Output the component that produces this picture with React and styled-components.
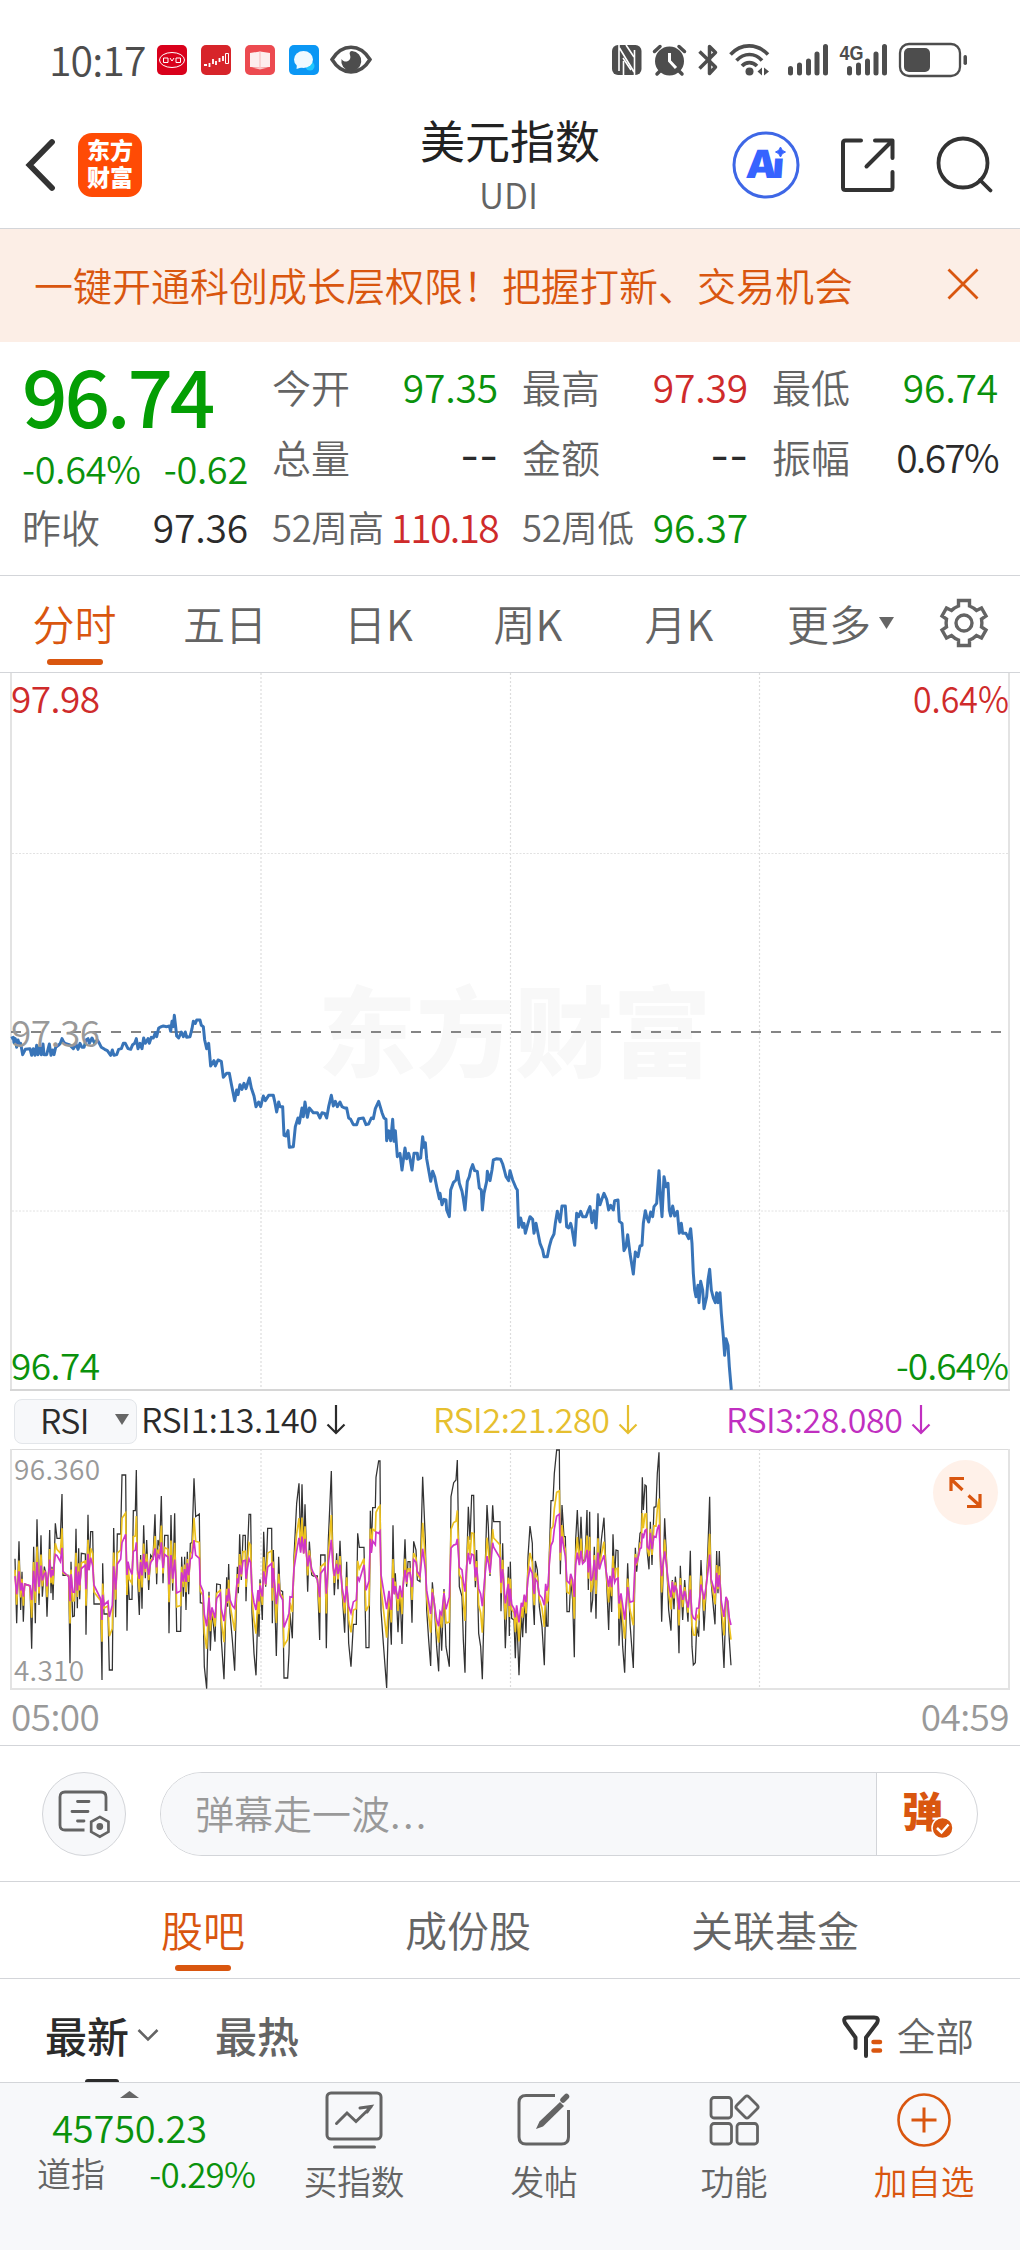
import React from "react";
import styled, { createGlobalStyle } from "styled-components";

const GREEN = "#0a920c";
const RED = "#cf2b2b";
const ORANGE = "#d9560f";
const GRAY = "#646464";
const DARK = "#2b2b2b";
const LINE = "#d3d5d9";

const GlobalStyle = createGlobalStyle`
  * {
    box-sizing: border-box;
  }
  body {
    margin: 0;
    background: #fff;
    font-family: "Noto Sans CJK SC", sans-serif;
    font-weight: 350;
    color: ${DARK};
  }
  svg {
    display: block;
    flex: none;
    overflow: visible;
  }
`;

const Page = styled.div`
  width: 1020px;
  height: 2250px;
  overflow: hidden;
  display: flex;
  flex-direction: column;
  white-space: nowrap;
`;

const StatusBar = styled.div`
  height: 100px;
  padding: 20px 52px 0 49px;
  display: flex;
  align-items: center;
  justify-content: space-between;
`;

const StatusGroup = styled.div`
  display: flex;
  align-items: center;
  gap: ${(p) => p.$gap}px;
`;

const NetworkGroup = styled.div`
  display: flex;
  align-items: center;
  gap: 11px;
  margin-left: 7px;
`;

const Clock = styled.span`
  width: 94px;
  font-size: 41px;
  line-height: 60px;
  letter-spacing: -0.9px;
  padding-bottom: 5px;
  color: #4d4d4d;
`;

const Header = styled.header`
  height: 129px;
  display: grid;
  grid-template-columns: 340px 1fr 340px;
  border-bottom: 1px solid ${LINE};
`;

const HeaderLeft = styled.div`
  display: flex;
  align-items: center;
  gap: 22px;
  padding: 2px 0 0 25px;
`;

const AppLogo = styled.div`
  width: 64px;
  height: 64px;
  border-radius: 14px;
  background: #ff4b05;
  color: #fff;
  font-size: 23px;
  line-height: 27px;
  font-weight: 900;
  text-align: center;
  padding-top: 3px;
`;

const HeaderTitle = styled.div`
  text-align: center;
  padding-top: 9px;
`;

const Title = styled.h1`
  margin: 0;
  font-size: 45px;
  line-height: 61px;
  font-weight: 400;
  color: #222;
`;

const Code = styled.div`
  font-size: 35px;
  line-height: 48px;
  padding-right: 3px;
  color: ${GRAY};
`;

const HeaderRight = styled.div`
  display: flex;
  align-items: center;
  justify-content: flex-end;
  gap: 40px;
  padding: 2px 26px 0 0;
`;

const Banner = styled.div`
  height: 113px;
  padding: 0 41px 4px 34px;
  display: flex;
  align-items: center;
  justify-content: space-between;
  background: #fceee6;
  color: ${ORANGE};
  font-size: 39px;
`;

const Quote = styled.section`
  height: 234px;
  padding: 9px 22px 0;
  display: flex;
  gap: 24px;
  border-bottom: 1px solid ${LINE};
`;

const PriceColumn = styled.div`
  width: 227px;
  color: ${GREEN};
`;

const Price = styled.div`
  height: 92px;
  font-size: 80px;
  line-height: 84px;
  font-weight: 500;
  letter-spacing: -3.2px;
  color: #049e04;
`;

const Change = styled.div`
  height: 48px;
  display: flex;
  justify-content: space-between;
  font-size: 38px;
  line-height: 50px;
  letter-spacing: -0.3px;
`;

const StatGrid = styled.div`
  flex: 1;
  display: grid;
  grid-template-columns: repeat(3, 226px);
  grid-auto-rows: 70px;
  column-gap: 24px;
`;

const Stat = styled.div`
  height: 70px;
  display: flex;
  align-items: center;
  justify-content: space-between;
`;

const StatLabel = styled.span`
  font-size: ${(p) => (p.$small ? 36.5 : 39)}px;
  letter-spacing: ${(p) => (p.$small ? -0.4 : 0)}px;
  color: ${GRAY};
`;

const StatValue = styled.span`
  font-size: 39px;
  letter-spacing: ${(p) => (p.$tight ? -1.7 : -0.2)}px;
  color: ${(p) => p.$color || DARK};
`;

const EmptyValue = styled.span`
  font-family: Inter, sans-serif;
  font-size: 41px;
  font-weight: 400;
  color: ${DARK};
`;

const Tabs = styled.nav`
  height: 97px;
  display: flex;
  border-bottom: 1px solid ${LINE};
`;

const Tab = styled.div`
  width: ${(p) => p.$w}px;
  display: flex;
  flex-direction: column;
  align-items: center;
  font-size: 42px;
  line-height: 60px;
  padding-top: 17px;
  color: ${(p) => (p.$active ? ORANGE : GRAY)};

  &::after {
    content: "";
    width: 56px;
    height: 6px;
    margin-top: 6px;
    border-radius: 3px;
    background: ${(p) => (p.$active ? ORANGE : "transparent")};
  }
`;

const TabLabel = styled.span`
  height: 60px;
  display: flex;
  align-items: center;
  gap: 8px;
`;

const IndicatorRow = styled.div`
  height: 58px;
  padding: 0 14px;
  display: grid;
  grid-template-columns: 127px 292px 293px 1fr;
  align-items: center;
`;

const IndicatorSelect = styled.div`
  width: 123px;
  height: 45px;
  display: flex;
  align-items: center;
  justify-content: space-between;
  padding: 0 7px 3px 25px;
  border: 1px solid #e3e6ea;
  border-radius: 8px;
  background: #f7f8fa;
  font-size: 34px;
  letter-spacing: -0.6px;
`;

const IndicatorValue = styled.div`
  display: flex;
  align-items: center;
  gap: 8px;
  font-size: 34px;
  line-height: 55px;
  letter-spacing: -0.4px;
  padding-bottom: 5px;
  color: ${(p) => p.$color};
`;

const TimeAxis = styled.div`
  height: 55px;
  padding: 0 11px;
  display: flex;
  justify-content: space-between;
  border-bottom: 1px solid ${LINE};
  color: #999;
  font-size: 37px;
  line-height: 49px;
  letter-spacing: -0.6px;
`;

const CommentBar = styled.div`
  height: 136px;
  padding: 0 42px;
  display: flex;
  align-items: center;
  gap: 34px;
  border-bottom: 1px solid ${LINE};
`;

const RoundButton = styled.div`
  width: 84px;
  height: 84px;
  display: flex;
  align-items: center;
  justify-content: center;
  border: 1px solid ${LINE};
  border-radius: 50%;
  background: #f7f8fa;
`;

const CommentInput = styled.div`
  flex: 1;
  height: 84px;
  display: flex;
  border: 1px solid ${LINE};
  border-radius: 42px;
  overflow: hidden;
`;

const Placeholder = styled.div`
  flex: 1;
  padding-left: 34px;
  background: #f7f8fa;
  color: #999;
  font-size: 39px;
  line-height: 78px;
`;

const Dots = styled.span`
  letter-spacing: 2.4px;
`;

const CommentToggle = styled.div`
  width: 101px;
  padding-left: 26px;
  display: flex;
  align-items: center;
  border-left: 1px solid ${LINE};
`;

const SortBar = styled.div`
  height: 104px;
  padding: 0 46px 0 45px;
  display: flex;
  justify-content: space-between;
  border-bottom: 1px solid ${LINE};
`;

const SortGroup = styled.div`
  display: flex;
  gap: 56px;
`;

const SortItem = styled.div`
  display: flex;
  flex-direction: column;
  align-items: center;
  justify-content: space-between;
  padding-top: 26px;
  font-size: 42px;
  line-height: 60px;
  font-weight: 500;
  color: ${(p) => (p.$active ? DARK : GRAY)};

  &::after {
    content: "";
    width: 34px;
    height: 3px;
    border-radius: 3px 3px 0 0;
    background: ${(p) => (p.$active ? DARK : "transparent")};
  }
`;

const Filter = styled.div`
  display: flex;
  align-items: center;
  gap: 14px;
  font-size: 38.5px;
  padding-top: 12px;
  color: ${GRAY};
`;

const FilterText = styled.span`
  line-height: 60px;
  padding-bottom: 6px;
`;

const BottomBar = styled.footer`
  flex: 1;
  display: grid;
  grid-template-columns: 259px repeat(4, 190px);
  background: #f7f8fa;
`;

const IndexTicker = styled.div`
  display: flex;
  flex-direction: column;
  align-items: center;
  padding-top: 8px;
  font-size: 38px;
  color: ${GREEN};
`;

const TickerValue = styled.div`
  line-height: 50px;
  margin-top: 4px;
  letter-spacing: -0.2px;
`;

const TickerRow = styled.div`
  width: 219px;
  display: flex;
  justify-content: space-between;
  font-size: 35px;
  line-height: 42px;
  letter-spacing: -0.9px;
  margin-left: 34px;
  padding-right: 1px;
`;

const TickerName = styled.span`
  font-size: 34px;
  letter-spacing: 0;
  color: ${GRAY};
`;

const Action = styled.div`
  display: flex;
  flex-direction: column;
  align-items: center;
  padding-top: 6px;
  font-size: 33.6px;
  line-height: 50px;
  gap: 7px;
  color: ${(p) => p.$color || GRAY};
`;

// Chart traces: x,y pairs at three units per pixel. The second half of a
// session starts 1140 units in.
const HALF = 1140;

const PRICE_A =
  "33,235 40,232 42,248 46,236 50,262 54,240 58,252 62,250 68,284 76,268 90,266 95,286 100,266 105,286 110,256 114,284 119,262 124,284 129,252 132,284 140,284 148,252 153,286 158,270 162,284 167,262 175,256 181,250 186,236 192,248 200,252 208,254 220,266 228,252 234,268 240,250 246,262 252,262 258,240 264,236 268,250 276,234 284,250 292,240 298,250 304,262 314,268 322,272 332,286 337,270 342,286 350,284 356,268 364,266 370,250 376,250 384,266 392,268 398,254 404,250 409,236 414,266 420,250 426,266 431,234 436,250 444,236 448,250 454,232 460,234 466,218 470,230 476,204 484,200 490,198 500,200 508,198 512,214 516,184 520,200 523,166 527,200 530,228 536,234 544,216 550,230 556,216 560,232 570,230 576,206 580,184 586,190 590,180 600,180 604,196 610,200 614,240 620,266 626,250 632,318 642,302 646,318 654,300 664,304 670,352 680,340 688,340 694,372 704,422 710,390 714,404 720,374 726,388 732,370 738,386 748,354 754,384 762,408 768,440 776,426 782,440 790,408 796,422 806,406 820,406 824,424 830,456 836,426 840,440 848,440 852,526 858,528 864,512 868,562 880,560 886,500 894,474 898,490 906,444 910,470 915,426 922,472 928,444 940,458 952,458 960,474 966,458 974,460 980,474 986,440 994,406 1000,438 1006,424 1012,440 1020,426 1026,440 1034,444 1040,444 1046,474 1052,478 1060,494 1070,494 1076,476 1090,474 1098,494 1106,492 1114,474 1120,476 1126,446 1136,424";
const PRICE_B =
  "6,458 12,474 18,478 20,542 26,512 32,542 38,478 42,544 46,512 52,590 60,580 66,630 70,600 75,564 80,596 86,580 90,596 96,630 102,580 112,580 114,598 122,594 128,530 132,562 136,548 140,596 146,630 152,664 158,634 164,650 170,680 178,716 180,700 186,734 192,718 198,720 200,750 208,770 212,690 220,668 228,660 233,634 238,670 246,694 250,716 255,750 262,664 268,650 272,630 278,614 284,632 292,634 298,684 304,690 307,750 312,700 320,664 322,634 330,662 336,630 340,600 350,596 362,598 368,612 374,634 378,650 386,662 390,632 398,660 408,684 412,690 416,802 422,774 428,802 432,790 436,820 444,790 450,770 458,778 462,820 468,790 474,820 480,850 488,870 492,890 502,890 508,860 514,838 522,822 526,790 532,754 540,786 546,738 556,738 560,800 566,804 572,790 576,806 584,856 590,760 596,770 602,754 608,770 618,770 624,754 630,740 636,788 642,752 648,804 654,704 660,734 666,716 672,700 680,718 686,750 692,736 700,750 704,722 714,720 718,784 726,790 732,872 738,860 743,824 750,880 760,942 766,876 774,890 780,858 786,856 790,790 796,752 800,770 806,786 812,756 818,770 822,740 830,730 837,632 842,720 846,770 852,650 858,680 864,670 868,750 872,768 878,738 884,768 892,754 898,820 904,790 908,820 918,820 926,836 932,806 936,850 940,940 944,990 948,1010 954,976 957,1028 962,964 968,990 972,1046 980,1010 984,960 989,928 994,990 1000,1014 1006,1028 1010,998 1014,1028 1020,998 1024,1060 1030,1130 1034,1186 1038,1136 1044,1156 1048,1220 1054,1290";
const RSI_A =
  "45,536 50,730 57,484 62,690 66,575 70,725 74,612 90,618 95,806 101,500 106,730 111,418 117,675 123,466 127,650 133,560 137,580 141,710 146,570 149,450 153,640 156,560 159,660 166,430 171,475 181,475 186,342 189,586 206,586 210,850 213,545 218,710 223,708 228,446 232,685 236,505 239,658 244,520 256,522 258,764 264,404 267,570 272,455 278,455 282,672 302,672 306,900 308,550 312,702 324,702 328,870 337,870 341,444 347,712 352,462 362,462 366,285 377,285 381,752 384,590 388,658 396,658 400,392 406,392 409,270 413,600 418,705 422,525 426,686 431,436 436,595 440,480 446,630 452,525 459,535 465,403 470,613 474,480 479,500 484,348 489,610 494,466 504,466 507,760 513,405 518,632 524,400 530,754 542,754 545,530 550,650 554,530 558,690 562,515 566,643 571,490 576,488 582,295 587,410 598,402 601,668 609,670 613,860 620,926 627,635 631,812 636,690 645,785 650,612 661,614 664,780 672,898 680,592 683,680 686,552 690,700 697,780 704,872 712,560 715,640 719,463 724,600 729,466 736,466 738,664 743,500 747,403 752,403 756,700 762,820 768,886 774,680 777,770 780,598 787,720 791,455 797,620 803,445 815,445 817,730 820,510 829,828 836,530 840,630 848,635 852,894 863,894 867,820 870,700 877,775 882,530 890,370 897,310 902,500 906,313 911,520 915,373 923,635 928,485 935,585 940,588 952,588 959,780 962,525 975,525 979,805 985,480 994,273 998,500 1003,646 1010,520 1014,628 1020,482 1026,630 1034,758 1040,545 1046,790 1053,860 1060,733 1069,733 1073,460 1078,502 1092,502 1098,803 1107,803 1111,392 1114,510 1118,383 1126,383 1128,292 1136,243";
const RSI_B =
  "0,243 3,690 10,790 20,924 27,650 34,794 39,436 43,640 46,580 54,757 60,630 66,792 70,610 75,478 80,620 84,545 90,545 96,728 101,484 108,510 112,600 120,605 128,290 136,480 140,690 146,780 152,858 157,607 163,675 170,800 176,874 180,700 185,812 192,627 198,800 208,860 213,350 221,308 228,300 232,240 238,620 246,650 250,780 255,878 260,560 265,380 270,480 275,346 281,346 286,622 290,510 296,760 302,800 307,898 314,620 321,375 325,440 330,588 338,376 341,425 360,425 363,694 368,490 376,805 385,560 388,768 391,545 395,715 402,720 406,835 410,700 417,886 424,700 428,772 433,650 438,760 444,530 450,438 457,490 460,680 463,735 466,543 472,570 478,680 486,740 493,856 497,664 500,738 504,738 508,520 513,362 519,362 523,280 530,210 538,210 541,583 546,375 552,470 556,470 561,695 568,695 572,600 578,660 583,832 587,480 592,390 598,535 603,410 608,542 615,540 621,390 625,630 629,395 633,697 638,660 643,500 648,716 654,400 658,565 664,480 672,413 677,540 686,750 690,600 695,696 699,463 704,590 708,510 714,512 717,797 723,670 728,800 734,878 743,550 750,730 760,864 766,503 770,575 776,510 780,460 784,455 787,292 790,390 795,315 799,318 802,520 807,568 811,425 816,555 822,382 828,380 832,280 837,217 841,530 845,725 850,560 854,415 858,500 866,690 873,752 877,600 882,688 886,590 892,650 897,820 901,557 908,720 914,600 924,725 931,512 936,800 940,855 946,848 950,740 956,770 963,540 968,650 972,752 978,640 984,500 989,350 993,600 1000,680 1005,733 1010,513 1014,640 1018,513 1024,700 1032,864 1038,655 1043,665 1048,780 1053,856";

const parse = (text, dx) =>
  text.split(" ").map((pair) => {
    const [x, y] = pair.split(",").map(Number);
    return [x + dx, y];
  });

const price = [...parse(PRICE_A, 0), ...parse(PRICE_B, HALF)];
const rsi1 = [...parse(RSI_A, 0), ...parse(RSI_B, HALF)];

// slower RSI lines: pull each point towards its local mean
const damp = (points, keep) =>
  points.map(([x, y]) => {
    const near = points.filter((p) => Math.abs(p[0] - x) < 30);
    const mean = near.reduce((sum, p) => sum + p[1], 0) / near.length;
    const base = mean * 0.6 + 590 * 0.4;
    return [x, base + (y - base) * keep];
  });

const rsi2 = damp(rsi1, 0.54);
const rsi3 = damp(rsi1, 0.28);

const toPoints = (points) => points.map((p) => p.join(",")).join(" ");

const GridLines = ({ height }) => (
  <g stroke="#dcdcdc" strokeWidth="1.2" strokeDasharray="2 2">
    {[261, 510.5, 759.5].map((x) => (
      <line key={x} x1={x} x2={x} y1="0" y2={height} />
    ))}
  </g>
);

const PriceChart = () => (
  <svg width="1020" height="718" viewBox="0 673 1020 718">
    <g transform="translate(0 673)">
      <GridLines height={717} />
    </g>
    <g stroke="#e2e2e2" strokeDasharray="2 1.5">
      <line x1="12" x2="1009" y1="853.5" y2="853.5" />
      <line x1="12" x2="1009" y1="1211" y2="1211" />
    </g>
    <text x="318" y="1069" fontSize="98" fontWeight="900" fill="#f8f8f8" textLength="393">
      东方财富
    </text>
    <path d="M11 673V1391M1009 673V1391" stroke="#e3e3e3" strokeWidth="2" />
    <path d="M10 1390H1010" stroke="#d6d6d6" strokeWidth="2" />
    <path d="M11 1032H1004" stroke="#858585" strokeWidth="2" strokeDasharray="10 10" />
    <polyline
      points={toPoints(price)}
      transform="translate(0 960) scale(0.33333)"
      fill="none"
      stroke="#3874b8"
      strokeWidth="9"
      strokeLinejoin="round"
    />
    <g fontSize="37">
      <text x="11" y="713" fill={RED} textLength="89">97.98</text>
      <text x="1009" y="713" fill={RED} textAnchor="end" textLength="96" lengthAdjust="spacingAndGlyphs">0.64%</text>
      <text x="11" y="1047" fill="#999" textLength="89">97.36</text>
      <text x="11" y="1380" fill={GREEN} textLength="89">96.74</text>
      <text x="1009" y="1380" fill={GREEN} textAnchor="end" textLength="113">-0.64%</text>
    </g>
  </svg>
);

const RsiChart = () => (
  <svg width="1020" height="242" viewBox="0 1449 1020 242">
    <g transform="translate(0 1449)">
      <GridLines height={240} />
    </g>
    <path d="M10 1449.5H1010" stroke="#dcdcdc" />
    <path d="M11 1449V1689H1009V1449" fill="none" stroke="#e3e3e3" strokeWidth="2" />
    <g transform="translate(0 1380) scale(0.33333)" fill="none" strokeWidth="3.8">
      <polyline points={toPoints(rsi1)} stroke="#333" />
      <polyline points={toPoints(rsi2)} stroke="#ecc11f" strokeWidth="5" />
      <polyline points={toPoints(rsi3)} stroke="#cf35c8" strokeWidth="5" />
    </g>
    <g fontSize="28" fill="#999">
      <text x="14" y="1480" textLength="86">96.360</text>
      <text x="14" y="1681" textLength="70">4.310</text>
    </g>
    <circle cx="965.5" cy="1492.5" r="32.5" fill="#fff1e9" />
    <path
      d="M951 1491V1478.5H964M952 1480L962.5 1490M980 1494V1506.5H967M979 1505L968.5 1495.5"
      fill="none"
      stroke={ORANGE}
      strokeWidth="3.2"
    />
  </svg>
);

const DownArrow = () => (
  <svg width="20" height="32" viewBox="0 0 20 32" fill="none" stroke="currentColor" strokeWidth="2.2">
    <path d="M10 2V30M1.500 21.500L10 30L18.500 21.500" />
  </svg>
);

const Caret = ({ width, height, up }) => (
  <svg width={width} height={height} viewBox="0 0 10 10" preserveAspectRatio="none">
    <path d={up ? "M0 10L5 0L10 10Z" : "M0 0H10L5 10Z"} fill="#666" />
  </svg>
);

const AppBadges = () => (
  <svg width="216" height="34" viewBox="157 43 216 34">
    <rect x="157" y="45" width="30" height="30" rx="5" fill="#d9001b" />
    <ellipse cx="172" cy="60" rx="12.500" ry="7.500" fill="none" stroke="#fff" strokeWidth="1" />
    <path d="M163.500 58H168V62.500H163.500ZM176 58H180.500V62.500H176ZM170 58L172 61L174 58" fill="none" stroke="#fff" />
    <rect x="201" y="45" width="30" height="30" rx="5" fill="#d7242a" />
    <path d="M204 65H207M209.500 63V67M213 59V64M216 61V65M219.500 58V62M223 56V61" stroke="#fff" strokeWidth="1.800" />
    <path d="M225.500 53.500H228.500V63.500H225.500Z" fill="none" stroke="#fff" />
    <rect x="245" y="45" width="30" height="30" rx="5" fill="#ec4a50" />
    <path d="M250 53L260 51.500L270 53V67L260 67.500L250 67Z" fill="#fff" opacity="0.9" />
    <path d="M260 51.500V67.500" stroke="#f3b9bb" />
    <path d="M252 67.500H268L260 69.500Z" fill="#fff" opacity="0.7" />
    <rect x="289" y="45" width="30" height="30" rx="5" fill="#0b97f4" />
    <circle cx="310" cy="66" r="4.500" fill="#1fc7ff" />
    <ellipse cx="303.500" cy="59.500" rx="9.500" ry="8.500" fill="#eef9ff" />
    <path d="M297 64L296.500 69L303 67Z" fill="#eef9ff" />
    <path d="M332 59.500C342 43 360 43 370 59.500C360 76 342 76 332 59.500Z" fill="none" stroke="#4d4d4d" strokeWidth="3.500" />
    <path d="M352 51A10 10 0 1 1 341.500 59C345 64 352 61 350 55C349 53 350 51 352 51Z" fill="#4d4d4d" />
  </svg>
);

const Nfc = () => (
  <svg width="30" height="30" viewBox="0 0 30 30">
    <rect x="0" y="0" width="29.500" height="30" rx="6" fill="#4d4d4d" />
    <path d="M7 0V26M22.500 5V30M7.500 3L22 27M11.500 16V30" stroke="#fff" strokeWidth="1.600" fill="none" />
    <path d="M11 13L19 25M14 0L22 12" stroke="#fff" strokeWidth="1.600" />
  </svg>
);

const Alarm = () => (
  <svg width="34" height="32" viewBox="0 0 34 32">
    <circle cx="16.500" cy="17" r="14.500" fill="#4d4d4d" />
    <path d="M1.500 7.500L7 2.500M31.500 7.500L26 2.500M4 30L8 26M29 30L25 26" stroke="#4d4d4d" strokeWidth="3.500" strokeLinecap="round" />
    <path d="M16.500 9V17L23 24" stroke="#fff" strokeWidth="3" fill="none" />
  </svg>
);

const Bluetooth = () => (
  <svg width="20" height="34" viewBox="0 0 20 34">
    <path d="M1.500 8.500L17.500 24L11.500 30.500V3.500L17.500 9.500L1.500 25.500" fill="none" stroke="#4d4d4d" strokeWidth="3.500" strokeLinejoin="round" />
  </svg>
);

const Wifi = () => (
  <svg width="41" height="34" viewBox="0 0 41 34">
    <g fill="none" stroke="#4d4d4d" strokeWidth="3.600">
      <path d="M1.500 11.500C12 0 28 0 39 11.500M7.500 17.500C15 9.500 26 9.500 33 17.500M13 23C17 18.500 23.500 18.500 28 23" />
    </g>
    <circle cx="20.500" cy="28.500" r="4" fill="#4d4d4d" />
    <path d="M28.500 28.500L33 24.500V32.500ZM40 28.500L35 24.500V32.500Z" fill="#4d4d4d" />
  </svg>
);

const Signal = ({ label }) => (
  <svg width={label ? 48 : 41} height="34" viewBox={label ? "-7 0 48 34" : "0 0 41 34"}>
    <path
      d="M2.500 25.500V30M11.500 22V30M20.500 18V30M29 11V30M37.500 3.500V30"
      stroke="#4d4d4d"
      strokeWidth="5"
      strokeLinecap="round"
    />
    {label && (
      <text x="-7.500" y="17" fontSize="20" fontWeight="700" fontFamily="Liberation Sans" fill="#4d4d4d" stroke="#fff" strokeWidth="3" paintOrder="stroke" textLength="24" lengthAdjust="spacingAndGlyphs">
        {label}
      </text>
    )}
  </svg>
);

const Battery = () => (
  <svg width="69" height="34" viewBox="0 0 69 34">
    <rect x="1" y="1" width="60" height="32" rx="9" fill="none" stroke="#4d4d4d" strokeWidth="2.300" />
    <rect x="5" y="5" width="26" height="24" rx="5" fill="#4d4d4d" />
    <rect x="64.500" y="12" width="3.500" height="10" rx="1.700" fill="#4d4d4d" />
  </svg>
);

const BackIcon = () => (
  <svg width="31" height="52" viewBox="0 0 31 52">
    <path d="M27 3L4.500 26L27 49" fill="none" stroke="#333" strokeWidth="5.800" strokeLinecap="round" />
  </svg>
);

const AiIcon = () => (
  <svg width="68" height="68" viewBox="0 0 68 68">
    <circle cx="34" cy="34" r="32" fill="none" stroke="#3e67e6" strokeWidth="3" />
    <text x="13.500" y="47" fontFamily="Inter" fontWeight="900" fontSize="39" fill="#3663ff" transform="skewX(-4) translate(3 0)" textLength="38">
      Ai
    </text>
    <rect x="41" y="15" width="13" height="12.500" fill="#fff" />
    <path d="M48.500 16Q49.500 20 53.500 21Q49.500 22 48.500 26Q47.500 22 43.500 21Q47.500 20 48.500 16Z" fill="#3663ff" stroke="#3663ff" strokeWidth="1" />
  </svg>
);

const ShareIcon = () => (
  <svg width="56" height="56" viewBox="0 0 56 56" fill="none" stroke="#333" strokeWidth="4" strokeLinecap="round" strokeLinejoin="round">
    <path d="M21 3.500H5.500Q3 3.500 3 6V50.500Q3 53 5.500 53H50Q52.500 53 52.500 50.500V35M35 3.500H52.500V21M52 4L26.500 29.500" />
  </svg>
);

const SearchIcon = () => (
  <svg width="58" height="58" viewBox="0 0 58 58" fill="none" stroke="#333" strokeWidth="3.800" strokeLinecap="round">
    <circle cx="27" cy="27" r="24.500" />
    <path d="M44 44L54.500 54.500" />
  </svg>
);

const CloseIcon = () => (
  <svg width="32" height="32" viewBox="0 0 32 32">
    <path d="M1.500 1.500L30.500 30.500M30.500 1.500L1.500 30.500" stroke={ORANGE} strokeWidth="2.800" />
  </svg>
);

const GearIcon = () => (
  <svg width="48" height="50" viewBox="0 0 48 50" fill="none" stroke={GRAY} strokeWidth="3.400">
    <path d="M18.500 2.500H29.500V8Q33.500 9.500 36.500 12.500L41.500 10L46 18L41.500 21Q42.300 25 41.500 29L46 32L41.500 40L36.500 37.500Q33.500 40.500 29.500 42V47.500H18.500V42Q14.500 40.500 11.500 37.500L6.500 40L2 32L6.500 29Q5.700 25 6.500 21L2 18L6.500 10L11.500 12.500Q14.500 9.500 18.500 8Z" />
    <circle cx="24" cy="25" r="8" />
  </svg>
);

const CommentSettingIcon = () => (
  <svg width="52" height="48" viewBox="0 0 52 48" fill="none" stroke={GRAY} strokeWidth="2.800" strokeLinecap="round">
    <path d="M26.500 40H7Q2 40 2 35V7Q2 2 7 2H43Q48 2 48 7V21" strokeLinecap="butt" />
    <path d="M19.500 11.500H31M14 21.500H30M19.500 31H26" />
    <path d="M42 27L51 32V42.500L42 47.500L33 42.500V32Z" transform="translate(1.500 1) scale(0.960)" />
    <circle cx="41.800" cy="36.500" r="2" fill={GRAY} />
  </svg>
);

const CommentToggleIcon = () => (
  <svg width="50" height="50" viewBox="0 0 50 50">
    <text x="-1" y="37.500" fontSize="41" fontWeight="900" fill={ORANGE}>
      弹
    </text>
    <circle cx="39.500" cy="39" r="10.500" fill={ORANGE} stroke="#fff" strokeWidth="1.500" />
    <path d="M34 39L38.500 43.500L45.500 35.500" fill="none" stroke="#fff" strokeWidth="2.500" />
  </svg>
);

const ChevronDown = () => (
  <svg width="22" height="14" viewBox="0 0 22 14">
    <path d="M1.500 2L11 11.500L20.500 2" fill="none" stroke={GRAY} strokeWidth="2.600" />
  </svg>
);

const FilterIcon = () => (
  <svg width="41" height="44" viewBox="0 0 41 44" fill="none" strokeLinecap="round" strokeLinejoin="round">
    <path d="M13.500 33V22.500L3 8Q0.500 2.500 6 2.500H32Q37.500 2.500 35 8L24 22.500V41" stroke="#333" strokeWidth="4" />
    <path d="M31.500 27H38M31.500 35.500H38" stroke={ORANGE} strokeWidth="4.500" />
  </svg>
);

const BuyIcon = () => (
  <svg width="58" height="60" viewBox="0 0 58 60" fill="none" stroke={GRAY} strokeWidth="3" strokeLinecap="round">
    <rect x="2" y="4" width="54" height="46" rx="4" />
    <path d="M11.500 34.500L22 24L31 32.500L46 18M35 19L46 17.500L42 23" />
    <path d="M9.500 58H49.500" />
  </svg>
);

const PostIcon = () => (
  <svg width="56" height="60" viewBox="0 0 56 60">
    <path d="M39 6.500H10Q3 6.500 3 13.500V48Q3 55 10 55H45.500Q52.500 55 52.500 48V21" fill="none" stroke={GRAY} strokeWidth="3" />
    <path d="M20 40L23.500 32.500L44 13L48 17L27 37.500Z" fill={GRAY} />
    <path d="M47 11L50.500 7.500" stroke={GRAY} strokeWidth="5.500" strokeLinecap="round" />
  </svg>
);

const FeatureIcon = () => (
  <svg width="52" height="60" viewBox="0 0 52 60" fill="none" stroke={GRAY} strokeWidth="2.800">
    <rect x="3" y="8.500" width="20.500" height="20.500" rx="3" />
    <rect x="3" y="34.500" width="20.500" height="20.500" rx="3" />
    <rect x="29" y="34.500" width="20.500" height="20.500" rx="3" />
    <rect x="30.500" y="9.500" width="17" height="17" rx="2.500" transform="rotate(45 39 18)" />
  </svg>
);

const AddIcon = () => (
  <svg width="56" height="60" viewBox="0 0 56 60" fill="none" stroke={ORANGE}>
    <circle cx="28" cy="31" r="25.500" strokeWidth="2.600" />
    <path d="M15.500 31H40.500M28 18.500V43.500" strokeWidth="3" />
  </svg>
);

const stats = [
  { label: "今开", value: "97.35", color: GREEN },
  { label: "最高", value: "97.39", color: RED },
  { label: "最低", value: "96.74", color: GREEN },
  { label: "总量" },
  { label: "金额" },
  { label: "振幅", value: "0.67%", tight: true },
  { label: "52周高", value: "110.18", color: RED, small: true, tight: true },
  { label: "52周低", value: "96.37", color: GREEN, small: true },
];

const periods = [
  { label: "分时", width: 149, active: true },
  { label: "五日", width: 152 },
  { label: "日K", width: 155 },
  { label: "周K", width: 144 },
  { label: "月K", width: 158 },
  { label: "更多", width: 165, more: true },
];

const sections = [
  { label: "股吧", width: 406, active: true },
  { label: "成份股", width: 124 },
  { label: "关联基金", width: 490 },
];

const App = () => {
  return (
    <Page>
      <GlobalStyle />
      <StatusBar>
        <StatusGroup $gap={14}>
          <Clock>10:17</Clock>
          <AppBadges />
        </StatusGroup>
        <StatusGroup $gap={11}>
          <Nfc />
          <Alarm />
          <Bluetooth />
          <Wifi />
          <NetworkGroup>
            <Signal />
            <Signal label="4G" />
            <Battery />
          </NetworkGroup>
        </StatusGroup>
      </StatusBar>

      <Header>
        <HeaderLeft>
          <BackIcon />
          <AppLogo>
            东方
            <br />
            财富
          </AppLogo>
        </HeaderLeft>
        <HeaderTitle>
          <Title>美元指数</Title>
          <Code>UDI</Code>
        </HeaderTitle>
        <HeaderRight>
          <AiIcon />
          <ShareIcon />
          <SearchIcon />
        </HeaderRight>
      </Header>

      <Banner>
        一键开通科创成长层权限！把握打新、交易机会
        <CloseIcon />
      </Banner>

      <Quote>
        <PriceColumn>
          <Price>96.74</Price>
          <Change>
            <span>-0.64%</span>
            <span>-0.62</span>
          </Change>
          <Stat>
            <StatLabel>昨收</StatLabel>
            <StatValue>97.36</StatValue>
          </Stat>
        </PriceColumn>
        <StatGrid>
          {stats.map((s) => (
            <Stat key={s.label}>
              <StatLabel $small={s.small}>{s.label}</StatLabel>
              {s.value ? (
                <StatValue $color={s.color} $tight={s.tight}>
                  {s.value}
                </StatValue>
              ) : (
                <EmptyValue>--</EmptyValue>
              )}
            </Stat>
          ))}
        </StatGrid>
      </Quote>

      <Tabs>
        {periods.map((t) => (
          <Tab key={t.label} $w={t.width} $active={t.active}>
            <TabLabel>
              {t.label}
              {t.more && <Caret width={15} height={12} />}
            </TabLabel>
          </Tab>
        ))}
        <Tab $w={81}>
          <TabLabel>
            <GearIcon />
          </TabLabel>
        </Tab>
      </Tabs>

      <PriceChart />
      <IndicatorRow>
        <IndicatorSelect>
          RSI
          <Caret width={14} height={11} />
        </IndicatorSelect>
        <IndicatorValue $color={DARK}>
          RSI1:13.140
          <DownArrow />
        </IndicatorValue>
        <IndicatorValue $color="#e6bf2f">
          RSI2:21.280
          <DownArrow />
        </IndicatorValue>
        <IndicatorValue $color="#c02fc0">
          RSI3:28.080
          <DownArrow />
        </IndicatorValue>
      </IndicatorRow>
      <RsiChart />
      <TimeAxis>
        <span>05:00</span>
        <span>04:59</span>
      </TimeAxis>

      <CommentBar>
        <RoundButton>
          <CommentSettingIcon />
        </RoundButton>
        <CommentInput>
          <Placeholder>
            弹幕走一波<Dots>...</Dots>
          </Placeholder>
          <CommentToggle>
            <CommentToggleIcon />
          </CommentToggle>
        </CommentInput>
      </CommentBar>

      <Tabs>
        {sections.map((t) => (
          <Tab key={t.label} $w={t.width} $active={t.active}>
            <TabLabel>{t.label}</TabLabel>
          </Tab>
        ))}
      </Tabs>

      <SortBar>
        <SortGroup>
          <SortItem $active>
            <TabLabel>
              最新
              <ChevronDown />
            </TabLabel>
          </SortItem>
          <SortItem>
            <TabLabel>最热</TabLabel>
          </SortItem>
        </SortGroup>
        <Filter>
          <FilterIcon />
          <FilterText>全部</FilterText>
        </Filter>
      </SortBar>

      <BottomBar>
        <IndexTicker>
          <Caret width={19} height={7} up />
          <TickerValue>45750.23</TickerValue>
          <TickerRow>
            <TickerName>道指</TickerName>
            <span>-0.29%</span>
          </TickerRow>
        </IndexTicker>
        <Action>
          <BuyIcon />
          买指数
        </Action>
        <Action>
          <PostIcon />
          发帖
        </Action>
        <Action>
          <FeatureIcon />
          功能
        </Action>
        <Action $color={ORANGE}>
          <AddIcon />
          加自选
        </Action>
      </BottomBar>
    </Page>
  );
};

export default App;
